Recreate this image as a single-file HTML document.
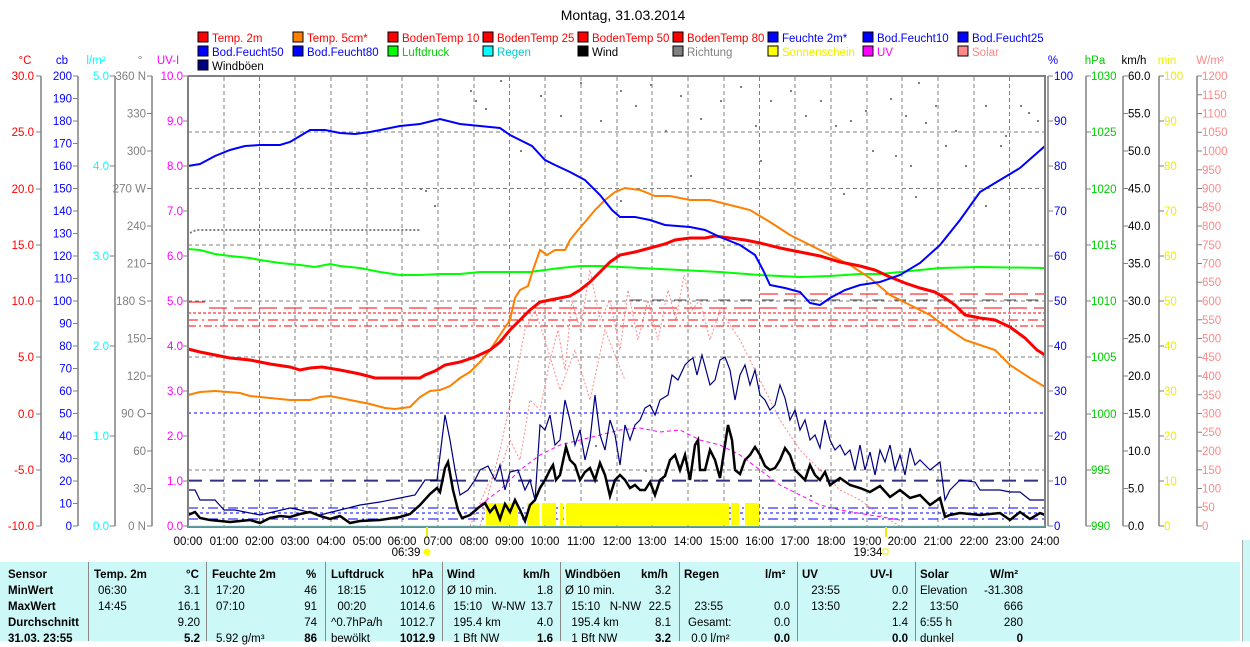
<!DOCTYPE html>
<html><head><meta charset="utf-8"><style>
body{margin:0;background:#fff;width:1250px;height:641px;overflow:hidden;font-family:"Liberation Sans",sans-serif}
svg{position:absolute;left:0;top:0}
.tb{position:absolute;left:0;top:562px;width:1240px;height:79px;background:#ccf8f8}
.c{position:absolute;font-size:11.5px;line-height:16px;white-space:nowrap;color:#000}
.b{font-weight:bold}
.sep{position:absolute;top:562px;width:1px;height:79px;background:#888}
</style></head><body>
<svg width="1250" height="641" font-family="Liberation Sans, sans-serif" font-size="11.5">
<text x="623" y="20" font-size="14" text-anchor="middle">Montag, 31.03.2014</text>
<g font-size="11.5">
<rect x="198" y="32" width="10" height="10" fill="#f00" stroke="#000"/><text x="212" y="42" fill="#f00">Temp. 2m</text>
<rect x="293" y="32" width="10" height="10" fill="#ff8000" stroke="#000"/><text x="307" y="42" fill="#f00">Temp. 5cm*</text>
<rect x="388" y="32" width="10" height="10" fill="#f00" stroke="#000"/><text x="402" y="42" fill="#f00">BodenTemp 10</text>
<rect x="483" y="32" width="10" height="10" fill="#f00" stroke="#000"/><text x="497" y="42" fill="#f00">BodenTemp 25</text>
<rect x="578" y="32" width="10" height="10" fill="#f00" stroke="#000"/><text x="592" y="42" fill="#f00">BodenTemp 50</text>
<rect x="673" y="32" width="10" height="10" fill="#f00" stroke="#000"/><text x="687" y="42" fill="#f00">BodenTemp 80</text>
<rect x="768" y="32" width="10" height="10" fill="#00f" stroke="#000"/><text x="782" y="42" fill="#00f">Feuchte 2m*</text>
<rect x="863" y="32" width="10" height="10" fill="#00f" stroke="#000"/><text x="877" y="42" fill="#00f">Bod.Feucht10</text>
<rect x="958" y="32" width="10" height="10" fill="#00f" stroke="#000"/><text x="972" y="42" fill="#00f">Bod.Feucht25</text>
<rect x="198" y="46" width="10" height="10" fill="#00f" stroke="#000"/><text x="212" y="56" fill="#00f">Bod.Feucht50</text>
<rect x="293" y="46" width="10" height="10" fill="#00f" stroke="#000"/><text x="307" y="56" fill="#00f">Bod.Feucht80</text>
<rect x="388" y="46" width="10" height="10" fill="#0f0" stroke="#000"/><text x="402" y="56" fill="#0c0">Luftdruck</text>
<rect x="483" y="46" width="10" height="10" fill="#0ff" stroke="#000"/><text x="497" y="56" fill="#0cc">Regen</text>
<rect x="578" y="46" width="10" height="10" fill="#000" stroke="#000"/><text x="592" y="56">Wind</text>
<rect x="673" y="46" width="10" height="10" fill="#808080" stroke="#000"/><text x="687" y="56" fill="#808080">Richtung</text>
<rect x="768" y="46" width="10" height="10" fill="#ff0" stroke="#000"/><text x="782" y="56" fill="#ee0">Sonnenschein</text>
<rect x="863" y="46" width="10" height="10" fill="#f0f" stroke="#000"/><text x="877" y="56" fill="#f0f">UV</text>
<rect x="958" y="46" width="10" height="10" fill="#f88" stroke="#000"/><text x="972" y="56" fill="#f88">Solar</text>
<rect x="198" y="60" width="10" height="10" fill="#000080" stroke="#000"/><text x="212" y="70">Windböen</text>
</g>
<g font-size="11.5" text-anchor="middle">
<text x="25" y="64" fill="#f00">°C</text><text x="62" y="64" fill="#00f">cb</text><text x="96" y="64" fill="#0ff">l/m²</text><text x="140" y="64" fill="#808080">°</text><text x="168" y="64" fill="#f0f">UV-I</text>
<text x="1053" y="64" fill="#00f">%</text><text x="1095" y="64" fill="#0c0">hPa</text><text x="1134" y="64" fill="#000">km/h</text><text x="1167" y="64" fill="#ee0">min</text><text x="1210" y="64" fill="#f88">W/m²</text>
</g>
<g stroke="#808080" stroke-width="1.5">
<line x1="41" y1="76" x2="41" y2="526"/><line x1="78" y1="76" x2="78" y2="526"/><line x1="115" y1="76" x2="115" y2="526"/><line x1="152" y1="76" x2="152" y2="526"/>
<line x1="1048" y1="76" x2="1048" y2="526"/><line x1="1086" y1="76" x2="1086" y2="526"/><line x1="1123" y1="76" x2="1123" y2="526"/><line x1="1159" y1="76" x2="1159" y2="526"/><line x1="1197" y1="76" x2="1197" y2="526"/>
</g>
<g stroke="#808080" stroke-width="1">
<path d="M36 76h5M36 132h5M36 189h5M36 245h5M36 301h5M36 357h5M36 414h5M36 470h5M36 526h5"/>
<path d="M73 76h5M73 98.5h5M73 121h5M73 143.5h5M73 166h5M73 188.5h5M73 211h5M73 233.5h5M73 256h5M73 278.5h5M73 301h5M73 323.5h5M73 346h5M73 368.5h5M73 391h5M73 413.5h5M73 436h5M73 458.5h5M73 481h5M73 503.5h5M73 526h5"/>
<path d="M110 76h5M110 166h5M110 256h5M110 346h5M110 436h5M110 526h5"/>
<path d="M147 76h5M147 113.5h5M147 151h5M147 188.5h5M147 226h5M147 263.5h5M147 301h5M147 338.5h5M147 376h5M147 413.5h5M147 451h5M147 488.5h5M147 526h5"/>
<path d="M183 76h5M183 121h5M183 166h5M183 211h5M183 256h5M183 301h5M183 346h5M183 391h5M183 436h5M183 481h5M183 526h5"/>
<path d="M1048 76h5M1048 121h5M1048 166h5M1048 211h5M1048 256h5M1048 301h5M1048 346h5M1048 391h5M1048 436h5M1048 481h5M1048 526h5"/>
<path d="M1086 76h5M1086 132h5M1086 189h5M1086 245h5M1086 301h5M1086 357h5M1086 414h5M1086 470h5M1086 526h5"/>
<path d="M1123 76h5M1123 113.5h5M1123 151h5M1123 188.5h5M1123 226h5M1123 263.5h5M1123 301h5M1123 338.5h5M1123 376h5M1123 413.5h5M1123 451h5M1123 488.5h5M1123 526h5"/>
<path d="M1159 76h5M1159 121h5M1159 166h5M1159 211h5M1159 256h5M1159 301h5M1159 346h5M1159 391h5M1159 436h5M1159 481h5M1159 526h5"/>
<path d="M1197 76h5M1197 94.75h5M1197 113.5h5M1197 132.25h5M1197 151h5M1197 169.75h5M1197 188.5h5M1197 207.25h5M1197 226h5M1197 244.75h5M1197 263.5h5M1197 282.25h5M1197 301h5M1197 319.75h5M1197 338.5h5M1197 357.25h5M1197 376h5M1197 394.75h5M1197 413.5h5M1197 432.25h5M1197 451h5M1197 469.75h5M1197 488.5h5M1197 507.25h5M1197 526h5"/>
</g>
<g text-anchor="end" fill="#f00"><text x="34" y="80">30.0</text><text x="34" y="136">25.0</text><text x="34" y="193">20.0</text><text x="34" y="249">15.0</text><text x="34" y="305">10.0</text><text x="34" y="361">5.0</text><text x="34" y="418">0.0</text><text x="34" y="474">-5.0</text><text x="34" y="530">-10.0</text></g>
<g text-anchor="end" fill="#00f"><text x="72" y="80">200</text><text x="72" y="102.5">190</text><text x="72" y="125">180</text><text x="72" y="147.5">170</text><text x="72" y="170">160</text><text x="72" y="192.5">150</text><text x="72" y="215">140</text><text x="72" y="237.5">130</text><text x="72" y="260">120</text><text x="72" y="282.5">110</text><text x="72" y="305">100</text><text x="72" y="327.5">90</text><text x="72" y="350">80</text><text x="72" y="372.5">70</text><text x="72" y="395">60</text><text x="72" y="417.5">50</text><text x="72" y="440">40</text><text x="72" y="462.5">30</text><text x="72" y="485">20</text><text x="72" y="507.5">10</text><text x="72" y="530">0</text></g>
<g text-anchor="end" fill="#0ff"><text x="109" y="80">5.0</text><text x="109" y="170">4.0</text><text x="109" y="260">3.0</text><text x="109" y="350">2.0</text><text x="109" y="440">1.0</text><text x="109" y="530">0.0</text></g>
<g text-anchor="end" fill="#808080"><text x="146" y="80">360 N</text><text x="146" y="117.5">330</text><text x="146" y="155">300</text><text x="146" y="192.5">270 W</text><text x="146" y="230">240</text><text x="146" y="267.5">210</text><text x="146" y="305">180 S</text><text x="146" y="342.5">150</text><text x="146" y="380">120</text><text x="146" y="417.5">90  O</text><text x="146" y="455">60</text><text x="146" y="492.5">30</text><text x="146" y="530">0   N</text></g>
<g text-anchor="end" fill="#f0f"><text x="183" y="80">10.0</text><text x="183" y="125">9.0</text><text x="183" y="170">8.0</text><text x="183" y="215">7.0</text><text x="183" y="260">6.0</text><text x="183" y="305">5.0</text><text x="183" y="350">4.0</text><text x="183" y="395">3.0</text><text x="183" y="440">2.0</text><text x="183" y="485">1.0</text><text x="183" y="530">0.0</text></g>
<g fill="#00f"><text x="1054" y="80">100</text><text x="1054" y="125">90</text><text x="1054" y="170">80</text><text x="1054" y="215">70</text><text x="1054" y="260">60</text><text x="1054" y="305">50</text><text x="1054" y="350">40</text><text x="1054" y="395">30</text><text x="1054" y="440">20</text><text x="1054" y="485">10</text><text x="1054" y="530">0</text></g>
<g fill="#0c0"><text x="1091" y="80">1030</text><text x="1091" y="136">1025</text><text x="1091" y="193">1020</text><text x="1091" y="249">1015</text><text x="1091" y="305">1010</text><text x="1091" y="361">1005</text><text x="1091" y="418">1000</text><text x="1091" y="474">995</text><text x="1091" y="530">990</text></g>
<g fill="#000"><text x="1128" y="80">60.0</text><text x="1128" y="117.5">55.0</text><text x="1128" y="155">50.0</text><text x="1128" y="192.5">45.0</text><text x="1128" y="230">40.0</text><text x="1128" y="267.5">35.0</text><text x="1128" y="305">30.0</text><text x="1128" y="342.5">25.0</text><text x="1128" y="380">20.0</text><text x="1128" y="417.5">15.0</text><text x="1128" y="455">10.0</text><text x="1128" y="492.5">5.0</text><text x="1128" y="530">0.0</text></g>
<g fill="#ee0"><text x="1164" y="80">100</text><text x="1164" y="125">90</text><text x="1164" y="170">80</text><text x="1164" y="215">70</text><text x="1164" y="260">60</text><text x="1164" y="305">50</text><text x="1164" y="350">40</text><text x="1164" y="395">30</text><text x="1164" y="440">20</text><text x="1164" y="485">10</text><text x="1164" y="530">0</text></g>
<g fill="#f88"><text x="1202" y="80">1200</text><text x="1202" y="99">1150</text><text x="1202" y="117.5">1100</text><text x="1202" y="136">1050</text><text x="1202" y="155">1000</text><text x="1202" y="174">950</text><text x="1202" y="192.5">900</text><text x="1202" y="211">850</text><text x="1202" y="230">800</text><text x="1202" y="249">750</text><text x="1202" y="267.5">700</text><text x="1202" y="286">650</text><text x="1202" y="305">600</text><text x="1202" y="324">550</text><text x="1202" y="342.5">500</text><text x="1202" y="361">450</text><text x="1202" y="380">400</text><text x="1202" y="399">350</text><text x="1202" y="417.5">300</text><text x="1202" y="436">250</text><text x="1202" y="455">200</text><text x="1202" y="474">150</text><text x="1202" y="492.5">100</text><text x="1202" y="511">50</text><text x="1202" y="530">0</text></g>
<g stroke="#808080" stroke-dasharray="4,3" stroke-width="1">
<path d="M224 77V526M259.5 77V526M295 77V526M331 77V526M367 77V526M402 77V526M438 77V526M474 77V526M509.5 77V526M545 77V526M581 77V526M617 77V526M652 77V526M688 77V526M724 77V526M759.5 77V526M795 77V526M831 77V526M867 77V526M902 77V526M938 77V526M974 77V526M1009.5 77V526"/>
<path d="M188 132H1045M188 188.5H1045M188 245H1045M188 301H1045M188 357H1045M188 470H1045"/>
</g>
<line x1="188" y1="413" x2="1045" y2="413" stroke="#00f" stroke-dasharray="3,3"/>
<line x1="188" y1="481" x2="1045" y2="481" stroke="#000" stroke-dasharray="14,8"/>
<line x1="188" y1="480" x2="1045" y2="480" stroke="#00f" stroke-dasharray="14,8" opacity=".6"/>
<line x1="188" y1="508" x2="1045" y2="508" stroke="#00f" stroke-dasharray="10,4,2,4"/>
<line x1="188" y1="513" x2="1045" y2="513" stroke="#00f" stroke-dasharray="3,3"/>
<line x1="188" y1="519" x2="1045" y2="519" stroke="#00f" stroke-dasharray="10,4,2,4"/>
<line x1="188" y1="302" x2="205" y2="302" stroke="#f00"/>
<line x1="209" y1="308" x2="1045" y2="308" stroke="#f00" stroke-dasharray="18,7"/>
<line x1="760" y1="294" x2="1045" y2="294" stroke="#f00" stroke-dasharray="18,7"/>
<line x1="188" y1="313" x2="1045" y2="313" stroke="#f00" stroke-dasharray="3,2"/>
<line x1="188" y1="320" x2="1045" y2="320" stroke="#f00" stroke-dasharray="10,4,2,4"/>
<line x1="188" y1="326" x2="1045" y2="326" stroke="#f00" stroke-dasharray="8,3,2,3"/>
<line x1="630" y1="300" x2="1045" y2="300" stroke="#000" stroke-dasharray="12,10" opacity=".7"/>
<g fill="#ff0"><rect x="486" y="503" width="32" height="22"/><rect x="527" y="503" width="12" height="22"/><rect x="542" y="503" width="14" height="22"/><rect x="560" y="503" width="3" height="22"/><rect x="566" y="503" width="163" height="22"/><rect x="731" y="503" width="8" height="22"/><rect x="745" y="503" width="14" height="22"/></g>
<path d="M190 233 L196 230 H420" stroke="#808080" stroke-width="2" stroke-dasharray="2,2" fill="none"/>
<g fill="#808080">
<rect x="420" y="188" width="2" height="2"/><rect x="425" y="190" width="2" height="2"/><rect x="434" y="205" width="2" height="2"/><rect x="475" y="100" width="2" height="2"/><rect x="485" y="108" width="2" height="2"/><rect x="470" y="90" width="2" height="2"/><rect x="500" y="80" width="2" height="2"/><rect x="540" y="95" width="2" height="2"/><rect x="560" y="115" width="2" height="2"/><rect x="580" y="82" width="2" height="2"/><rect x="600" y="120" width="2" height="2"/><rect x="620" y="90" width="2" height="2"/><rect x="635" y="105" width="2" height="2"/><rect x="650" y="84" width="2" height="2"/><rect x="665" y="130" width="2" height="2"/><rect x="680" y="95" width="2" height="2"/><rect x="700" y="118" width="2" height="2"/><rect x="720" y="100" width="2" height="2"/><rect x="740" y="86" width="2" height="2"/><rect x="755" y="125" width="2" height="2"/><rect x="770" y="100" width="2" height="2"/><rect x="790" y="90" width="2" height="2"/><rect x="805" y="115" width="2" height="2"/><rect x="820" y="100" width="2" height="2"/><rect x="835" y="125" width="2" height="2"/><rect x="850" y="120" width="2" height="2"/><rect x="865" y="110" width="2" height="2"/><rect x="872" y="150" width="2" height="2"/><rect x="890" y="98" width="2" height="2"/><rect x="905" y="115" width="2" height="2"/><rect x="918" y="82" width="2" height="2"/><rect x="925" y="122" width="2" height="2"/><rect x="935" y="105" width="2" height="2"/><rect x="945" y="145" width="2" height="2"/><rect x="955" y="130" width="2" height="2"/><rect x="965" y="165" width="2" height="2"/><rect x="985" y="105" width="2" height="2"/><rect x="1000" y="145" width="2" height="2"/><rect x="1005" y="135" width="2" height="2"/><rect x="1020" y="105" width="2" height="2"/><rect x="1028" y="112" width="2" height="2"/><rect x="1037" y="120" width="2" height="2"/><rect x="895" y="155" width="2" height="2"/><rect x="910" y="165" width="2" height="2"/><rect x="985" y="205" width="2" height="2"/><rect x="915" y="196" width="2" height="2"/><rect x="843" y="193" width="2" height="2"/><rect x="520" y="150" width="2" height="2"/><rect x="560" y="300" width="2" height="2"/><rect x="620" y="200" width="2" height="2"/><rect x="690" y="175" width="2" height="2"/><rect x="760" y="160" width="2" height="2"/><rect x="595" y="445" width="2" height="2"/><rect x="645" y="470" width="2" height="2"/><rect x="700" y="480" width="2" height="2"/><rect x="810" y="495" width="2" height="2"/></g>
<polyline fill="none" stroke="#f88" stroke-dasharray="2,2" points="470,526 490,480 500,470 510,440 520,460 530,400 540,410 550,360 558,330 565,370 572,300 580,330 590,270 600,320 610,300 620,350 628,290 638,340 648,300 658,340 668,290 676,320 684,275 692,310 700,300 710,340 720,310 740,340 760,380 780,420 800,450 820,470 840,490 860,500 880,515 900,526"/>
<polyline fill="none" stroke="#f88" stroke-dasharray="2,2" points="480,526 500,450 515,380 525,330 535,310 545,340 560,390 575,350 590,400 605,330 625,380"/>
<polyline fill="none" stroke="#f0f" stroke-dasharray="4,3" points="480,505 500,490 520,470 540,455 560,445 580,440 600,435 620,430 640,428 660,432 680,430 700,440 720,445 740,455 760,470 780,485 800,495 820,505 840,510 870,515 900,520"/>
<polyline fill="none" stroke="#000080" stroke-width="1.2" points="188,490 195,490 200,500 215,500 224,510 235,510 260,515 290,508 300,510 320,515 340,510 360,505 380,502 400,498 415,495 425,480 437,480 445,415 450,440 455,470 460,495 468,490 475,480 480,470 488,466 495,480 500,465 505,490 510,472 518,470 525,490 530,480 535,500 540,425 545,430 550,415 555,445 560,440 565,400 570,420 575,445 580,430 585,460 590,440 595,395 600,435 605,450 610,420 615,435 620,465 625,425 630,440 635,425 640,420 645,408 650,405 655,415 660,400 668,395 672,375 678,380 685,365 690,360 693,358 697,375 702,355 706,370 710,385 715,380 720,360 725,357 730,370 735,400 740,375 745,365 750,385 755,370 760,395 765,400 770,410 775,405 780,385 785,398 790,420 795,410 800,430 805,420 810,440 815,435 820,448 825,420 830,440 835,450 840,445 845,455 850,450 855,470 860,445 865,470 870,452 875,475 880,450 885,462 890,445 895,470 900,455 905,475 910,448 915,465 920,460 930,470 940,462 945,500 950,490 960,480 975,482 980,490 1000,490 1010,492 1020,492 1030,500 1045,500"/>
<polyline fill="none" stroke="#000" stroke-width="2.5" points="188,515 195,512 200,518 210,520 230,522 250,520 260,523 270,518 280,516 290,517 300,514 310,512 320,516 330,519 340,516 350,523 360,521 380,520 400,517 410,514 420,505 430,494 437,488 440,492 445,468 448,462 453,490 458,510 462,518 470,515 478,508 485,503 490,512 495,506 500,519 505,504 510,512 515,500 520,510 525,521 530,505 535,500 540,488 545,480 550,470 553,465 556,480 560,475 566,447 570,460 575,465 580,480 585,472 590,468 595,480 600,463 605,475 610,496 615,480 620,475 625,480 630,488 635,485 640,490 645,490 650,482 655,495 660,480 665,476 670,460 675,455 680,470 685,455 690,480 695,445 698,440 700,470 705,470 710,450 715,460 720,478 728,425 732,440 735,470 740,474 745,460 750,455 755,447 760,455 765,466 770,470 775,468 780,460 785,448 790,455 795,470 800,475 805,480 810,465 815,475 820,480 825,472 830,485 840,478 850,485 860,488 870,492 880,486 890,497 900,490 910,498 920,495 930,505 940,498 945,517 950,515 960,513 980,515 1000,513 1010,520 1020,512 1030,519 1040,513 1045,515"/>
<polyline fill="none" stroke="#0f0" stroke-width="2" points="188,249 200,250 215,254 230,256 250,258 260,260 280,263 300,265 315,267 330,264 340,266 360,268 380,272 400,275 420,275 440,274 460,274 480,272 500,272 530,272 560,268 580,266 600,266 640,268 680,270 720,272 760,275 800,277 830,276 860,274 880,274 900,272 920,270 940,268 980,267 1045,268"/>
<polyline fill="none" stroke="#ff8000" stroke-width="2" points="188,395 200,392 215,391 240,393 250,396 270,398 290,400 300,400 310,400 320,397 330,396 350,400 370,404 385,408 395,409 410,407 420,397 430,391 440,390 450,386 460,378 470,372 480,362 490,350 500,335 510,320 515,298 520,290 528,286 533,270 540,250 547,255 555,250 565,250 570,240 578,230 585,222 595,210 605,200 615,192 625,188 640,190 655,196 670,196 690,200 710,200 730,205 750,210 770,222 790,235 810,245 830,255 850,265 870,278 890,295 910,305 930,315 950,330 965,340 980,345 995,350 1010,365 1030,378 1045,387"/>
<polyline fill="none" stroke="#f00" stroke-width="3" points="188,349 200,352 215,355 230,358 250,360 270,364 290,367 300,370 310,368 322,367 340,370 360,374 375,378 400,378 420,378 425,375 435,371 445,365 460,362 475,357 490,350 500,342 510,330 520,320 530,310 540,302 555,299 570,296 580,290 590,282 600,272 610,262 620,255 635,252 650,248 665,244 675,240 690,238 705,238 715,236 730,238 745,240 760,243 780,248 800,252 820,256 840,262 860,266 875,270 890,277 905,283 920,288 935,292 945,298 955,305 965,315 980,318 995,320 1010,327 1025,338 1037,350 1045,355"/>
<polyline fill="none" stroke="#00f" stroke-width="2" points="188,166 200,164 215,156 230,150 245,146 260,145 280,145 290,142 300,136 310,130 325,130 340,133 355,134 370,132 385,129 400,126 420,124 440,119 460,124 480,126 500,128 510,135 520,140 532,146 545,160 555,165 570,172 585,180 600,195 612,210 620,217 635,217 650,220 665,225 690,227 705,230 720,237 740,245 755,255 763,270 770,285 785,288 800,292 810,303 820,305 830,298 845,290 860,285 880,282 900,275 920,263 940,245 960,220 980,192 1000,180 1020,168 1045,146"/>
<path d="M188 76V527H1045V76H188" fill="none" stroke="#808080" stroke-width="2"/>
<line x1="188" y1="526" x2="1045" y2="526" stroke="#0ff" opacity=".5"/>
<line x1="427" y1="527" x2="427" y2="537" stroke="#ee0" stroke-width="2"/>
<line x1="886" y1="527" x2="886" y2="537" stroke="#ee0" stroke-width="2"/>
<g font-size="11.5" text-anchor="middle"><text x="188" y="545">00:00</text><text x="224" y="545">01:00</text><text x="259.5" y="545">02:00</text><text x="295" y="545">03:00</text><text x="331" y="545">04:00</text><text x="367" y="545">05:00</text><text x="402" y="545">06:00</text><text x="438" y="545">07:00</text><text x="474" y="545">08:00</text><text x="509.5" y="545">09:00</text><text x="545" y="545">10:00</text><text x="581" y="545">11:00</text><text x="617" y="545">12:00</text><text x="652" y="545">13:00</text><text x="688" y="545">14:00</text><text x="724" y="545">15:00</text><text x="759.5" y="545">16:00</text><text x="795" y="545">17:00</text><text x="831" y="545">18:00</text><text x="867" y="545">19:00</text><text x="902" y="545">20:00</text><text x="938" y="545">21:00</text><text x="974" y="545">22:00</text><text x="1009.5" y="545">23:00</text><text x="1045" y="545">24:00</text>
<text x="406" y="556">06:39</text><text x="868" y="556">19:34</text></g>
<circle cx="427" cy="552" r="3.5" fill="#ff0"/><rect x="883" y="549" width="5" height="5" fill="none" stroke="#ee0"/>
</svg>
<div class="tb"></div>
<div style="position:absolute;left:1242px;top:540px;width:8px;height:101px;background:#ccf8f8;border-left:1px solid #aaa"></div>
<div class="sep" style="left:88px"></div><div class="sep" style="left:206px"></div><div class="sep" style="left:325px"></div><div class="sep" style="left:442px"></div><div class="sep" style="left:560px"></div><div class="sep" style="left:679px"></div><div class="sep" style="left:797px"></div><div class="sep" style="left:915px"></div>
<div class="c b" style="left:8px;top:567px">Sensor<br>MinWert<br>MaxWert<br>Durchschnitt<br>31.03. 23:55</div>
<div class="c b" style="left:94px;top:567px">Temp. 2m</div><div class="c b" style="left:186px;top:567px">°C</div>
<div class="c" style="left:98px;top:583px">06:30<br>14:45</div><div class="c" style="left:150px;top:583px;text-align:right;width:50px">3.1<br>16.1<br>9.20<br><b>5.2</b></div>
<div class="c b" style="left:212px;top:567px">Feuchte 2m</div><div class="c b" style="left:306px;top:567px">%</div>
<div class="c" style="left:216px;top:583px">17:20<br>07:10<br><br>5.92 g/m³</div><div class="c" style="left:270px;top:583px;text-align:right;width:47px">46<br>91<br>74<br><b>86</b></div>
<div class="c b" style="left:331px;top:567px">Luftdruck</div><div class="c b" style="left:412px;top:567px">hPa</div>
<div class="c" style="left:331px;top:583px">&nbsp; 18:15<br>&nbsp; 00:20<br>^0.7hPa/h<br>bewölkt</div><div class="c" style="left:380px;top:583px;text-align:right;width:55px">1012.0<br>1014.6<br>1012.7<br><b>1012.9</b></div>
<div class="c b" style="left:447px;top:567px">Wind</div><div class="c b" style="left:523px;top:567px">km/h</div>
<div class="c" style="left:447px;top:583px">Ø 10 min.<br>&nbsp; 15:10 &nbsp; W-NW<br>&nbsp; 195.4 km<br>&nbsp; 1 Bft NW</div><div class="c" style="left:510px;top:583px;text-align:right;width:43px">1.8<br>13.7<br>4.0<br><b>1.6</b></div>
<div class="c b" style="left:565px;top:567px">Windböen</div><div class="c b" style="left:641px;top:567px">km/h</div>
<div class="c" style="left:565px;top:583px">Ø 10 min.<br>&nbsp; 15:10 &nbsp; N-NW<br>&nbsp; 195.4 km<br>&nbsp; 1 Bft NW</div><div class="c" style="left:628px;top:583px;text-align:right;width:43px">3.2<br>22.5<br>8.1<br><b>3.2</b></div>
<div class="c b" style="left:684px;top:567px">Regen</div><div class="c b" style="left:765px;top:567px">l/m²</div>
<div class="c" style="left:688px;top:599px">&nbsp; 23:55<br>Gesamt:<br>&nbsp;0.0 l/m²</div><div class="c" style="left:740px;top:599px;text-align:right;width:50px">0.0<br>0.0<br><b>0.0</b></div>
<div class="c b" style="left:802px;top:567px">UV</div><div class="c b" style="left:870px;top:567px">UV-I</div>
<div class="c" style="left:808px;top:583px">&nbsp;23:55<br>&nbsp;13:50</div><div class="c" style="left:860px;top:583px;text-align:right;width:48px">0.0<br>2.2<br>1.4<br><b>0.0</b></div>
<div class="c b" style="left:920px;top:567px">Solar</div><div class="c b" style="left:990px;top:567px">W/m²</div>
<div class="c" style="left:920px;top:583px">Elevation<br>&nbsp;&nbsp; 13:50<br>6:55 h<br>dunkel</div><div class="c" style="left:970px;top:583px;text-align:right;width:53px">-31.308<br>666<br>280<br><b>0</b></div>
</body></html>
